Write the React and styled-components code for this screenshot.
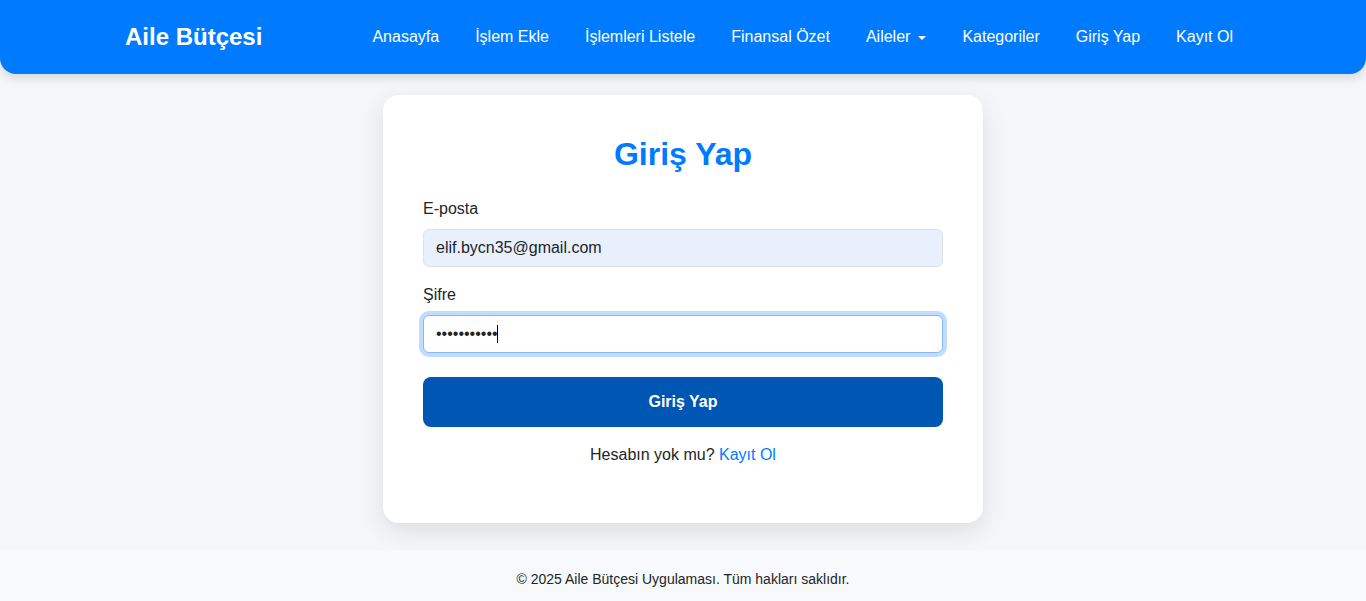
import React from 'react';
import styled, { createGlobalStyle } from 'styled-components';

const GlobalStyle = createGlobalStyle`
  * { box-sizing: border-box; }
  body {
    margin: 0;
    background: #f4f6f9;
    font-family: "Liberation Sans", Arial, sans-serif;
    color: #212529;
    font-size: 16px;
    line-height: 1.5;
  }
`;

const Page = styled.div`
  min-height: 100vh;
  display: flex;
  flex-direction: column;
`;

const Navbar = styled.nav`
  height: 74px;
  background: #007bff;
  border-radius: 0 0 16px 16px;
  box-shadow: 0 4px 10px rgba(0, 0, 0, 0.12);
  position: relative;
  z-index: 1;
`;

const NavInner = styled.div`
  width: 1140px;
  height: 100%;
  margin: 0 auto;
  padding: 0 12px;
  display: flex;
  align-items: center;
  justify-content: space-between;
`;

const Brand = styled.a`
  color: #fff;
  font-size: 24px;
  font-weight: 700;
  text-decoration: none;
`;

const NavLinks = styled.ul`
  list-style: none;
  margin: 0;
  padding: 0;
  display: flex;
  align-items: center;
  gap: 20px;
`;

const NavLink = styled.a`
  display: flex;
  align-items: center;
  gap: 8px;
  color: #fff;
  padding: 8px;
  font-size: 16px;
  text-decoration: none;
`;

const Caret = styled.span`
  width: 0;
  height: 0;
  border-left: 4px solid transparent;
  border-right: 4px solid transparent;
  border-top: 4px solid #fff;
  margin-top: 1px;
`;

const Main = styled.main`
  flex: 1;
  display: flex;
  justify-content: center;
  align-items: flex-start;
  padding: 21px 0 27px;
`;

const Card = styled.div`
  width: 600px;
  background: #fff;
  border-radius: 16px;
  padding: 40px 40px 56px;
  box-shadow: 0 8px 24px rgba(0, 0, 0, 0.1);
`;

const Title = styled.h2`
  margin: 0 0 24px;
  text-align: center;
  color: #007bff;
  font-size: 32px;
  line-height: 1.2;
  font-weight: 700;
`;

const Field = styled.div`
  margin-bottom: ${p => p.$last ? '24px' : '16px'};
`;

const Label = styled.label`
  display: block;
  margin-bottom: 8px;
  font-size: 16px;
`;

const InputWrap = styled.div`
  position: relative;
`;

const Input = styled.input`
  display: block;
  width: 100%;
  height: 38px;
  padding: 6px 12px;
  font-family: inherit;
  font-size: 16px;
  color: #212529;
  border-radius: 6px;
  outline: none;
  border: 1px solid ${p => p.$focused ? '#86b7fe' : '#dee2e6'};
  background: ${p => p.$autofill ? '#e8f0fe' : '#fff'};
  box-shadow: ${p => p.$focused ? '0 0 0 4px rgba(13, 110, 253, 0.25)' : 'none'};
`;

const TextCursor = styled.span`
  position: absolute;
  left: 74px;
  top: 10px;
  width: 1px;
  height: 18px;
  background: #000;
`;

const SubmitButton = styled.button`
  display: block;
  width: 100%;
  height: 50px;
  border: none;
  border-radius: 8px;
  background: #0056b3;
  color: #fff;
  font-family: inherit;
  font-size: 16px;
  font-weight: 700;
  cursor: pointer;
`;

const Hint = styled.p`
  margin: 16px 0 0;
  text-align: center;
  font-size: 16px;

  a {
    color: #007bff;
    text-decoration: none;
  }
`;

const Footer = styled.footer`
  background: #f8f9fa;
  text-align: center;
  font-size: 14px;
  color: #212529;
  padding: 19px 0 12px;
`;

const links = ['Anasayfa', 'İşlem Ekle', 'İşlemleri Listele', 'Finansal Özet', 'Aileler', 'Kategoriler', 'Giriş Yap', 'Kayıt Ol'];

function App() {
    return (
        <Page>
            <GlobalStyle />
            <Navbar>
                <NavInner>
                    <Brand href="#">Aile Bütçesi</Brand>
                    <NavLinks>
                        {links.map(l => (
                            <li key={l}>
                                <NavLink href="#">
                                    {l}
                                    {l === 'Aileler' && <Caret />}
                                </NavLink>
                            </li>
                        ))}
                    </NavLinks>
                </NavInner>
            </Navbar>
            <Main>
                <Card>
                    <Title>Giriş Yap</Title>
                    <Field>
                        <Label htmlFor="email">E-posta</Label>
                        <Input id="email" type="text" $autofill readOnly value="elif.bycn35@gmail.com" />
                    </Field>
                    <Field $last>
                        <Label htmlFor="password">Şifre</Label>
                        <InputWrap>
                            <Input id="password" type="password" $focused readOnly value="elifbaycan1" />
                            <TextCursor />
                        </InputWrap>
                    </Field>
                    <SubmitButton>Giriş Yap</SubmitButton>
                    <Hint>Hesabın yok mu? <a href="#">Kayıt Ol</a></Hint>
                </Card>
            </Main>
            <Footer>© 2025 Aile Bütçesi Uygulaması. Tüm hakları saklıdır.</Footer>
        </Page>
    );
}

export default App;
